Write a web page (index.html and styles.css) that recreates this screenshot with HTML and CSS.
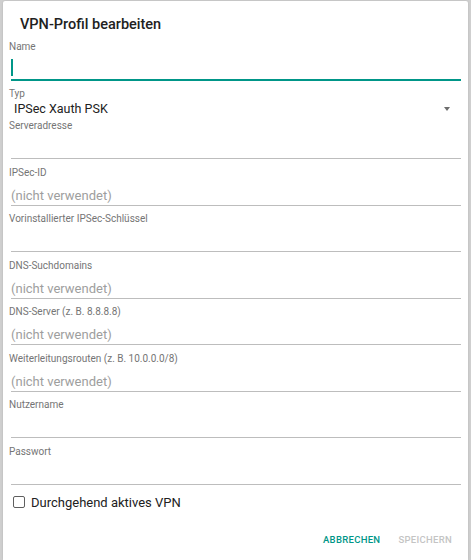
FILE: index.html
```html
<!DOCTYPE html>
<html lang="de">
<head>
<meta charset="utf-8">
<title>VPN-Profil bearbeiten</title>
<link rel="stylesheet" href="styles.css">
</head>
<body>
<div class="dialog">
  <h1 class="title">VPN-Profil bearbeiten</h1>
  <div class="form">
    <div class="field">
      <div class="label">Name</div>
      <div class="input focused"><span class="cursor"></span></div>
    </div>
    <div class="field select-field">
      <div class="label">Typ</div>
      <div class="select">
        <span class="select-value">IPSec Xauth PSK</span>
        <span class="arrow"></span>
      </div>
    </div>
    <div class="field">
      <div class="label">Serveradresse</div>
      <div class="input"></div>
    </div>
    <div class="field">
      <div class="label">IPSec-ID</div>
      <div class="input"><span class="placeholder">(nicht verwendet)</span></div>
    </div>
    <div class="field">
      <div class="label">Vorinstallierter IPSec-Schlüssel</div>
      <div class="input"></div>
    </div>
    <div class="field">
      <div class="label">DNS-Suchdomains</div>
      <div class="input"><span class="placeholder">(nicht verwendet)</span></div>
    </div>
    <div class="field">
      <div class="label">DNS-Server (z. B. 8.8.8.8)</div>
      <div class="input"><span class="placeholder">(nicht verwendet)</span></div>
    </div>
    <div class="field">
      <div class="label">Weiterleitungsrouten (z. B. 10.0.0.0/8)</div>
      <div class="input"><span class="placeholder">(nicht verwendet)</span></div>
    </div>
    <div class="field">
      <div class="label">Nutzername</div>
      <div class="input"></div>
    </div>
    <div class="field">
      <div class="label">Passwort</div>
      <div class="input"></div>
    </div>
    <label class="check">
      <span class="box"></span>
      <span class="check-text">Durchgehend aktives VPN</span>
    </label>
  </div>
  <div class="actions">
    <span class="btn primary">ABBRECHEN</span>
    <span class="btn disabled">SPEICHERN</span>
  </div>
</div>
</body>
</html>
```

FILE: styles.css
```css
html, body {
  margin: 0;
  padding: 0;
  height: 100%;
}
body {
  background: #cfcfcf;
  font-family: Roboto, "Liberation Sans", sans-serif;
  overflow: hidden;
}
.dialog {
  margin: 1px 3px 0 3px;
  height: 559px;
  background: #fff;
  border-radius: 2px 2px 0 0;
  box-shadow: 0 0 2px rgba(0,0,0,0.15);
  display: flex;
  flex-direction: column;
  box-sizing: border-box;
  padding: 0 7px 0 6px;
}
.title {
  margin: 0;
  padding: 14px 0 0 11px;
  height: 22px;
  line-height: 20px;
  font-size: 14.5px;
  font-weight: 500;
  color: #212121;
}
.form {
  display: flex;
  flex-direction: column;
  padding-top: 3px;
}
.label {
  font-size: 10px;
  line-height: 14px;
  color: #757575;
  height: 14px;
}
.field {
  display: flex;
  flex-direction: column;
}
.input {
  margin-left: 2px;
  height: 24px;
  border-bottom: 1px solid #bdbdbd;
  display: flex;
  align-items: center;
  padding-top: 1px;
  margin-bottom: 6.5px;
}
.input.focused {
  border-bottom: 2px solid #009688;
  height: 25px;
  padding-top: 0;
  margin-bottom: 6px;
}
.cursor {
  display: block;
  width: 2px;
  height: 17px;
  background: #009688;
  margin-top: 2px;
}
.placeholder {
  font-size: 13px;
  color: #9e9e9e;
  line-height: 16px;
  margin-top: 6px;
}
.select {
  height: 18px;
  display: flex;
  align-items: center;
  padding-left: 5px;
  padding-right: 11px;
  margin-top: -2px;
  margin-bottom: 2px;
}
.select-value {
  flex: 1;
  font-size: 12.5px;
  color: #212121;
}
.arrow {
  width: 0;
  height: 0;
  border-left: 3.5px solid transparent;
  border-right: 3.5px solid transparent;
  border-top: 4px solid #6d6d6d;
  margin-top: 2px;
}
.check {
  display: flex;
  align-items: center;
  margin-top: 0;
  padding-left: 4px;
  height: 22px;
}
.box {
  width: 10px;
  height: 10px;
  border: 1.5px solid #5f5f5f;
  border-radius: 2px;
  margin-right: 6px;
}
.check-text {
  font-size: 13px;
  color: #212121;
}
.actions {
  margin-top: auto;
  display: flex;
  justify-content: flex-end;
  gap: 18px;
  padding: 0 9px 14px 0;
}
.btn {
  font-size: 9.5px;
  font-weight: 500;
  letter-spacing: 0.3px;
  line-height: 12px;
}
.primary { color: #009688; }
.disabled { color: #c4c4c4; }
```
